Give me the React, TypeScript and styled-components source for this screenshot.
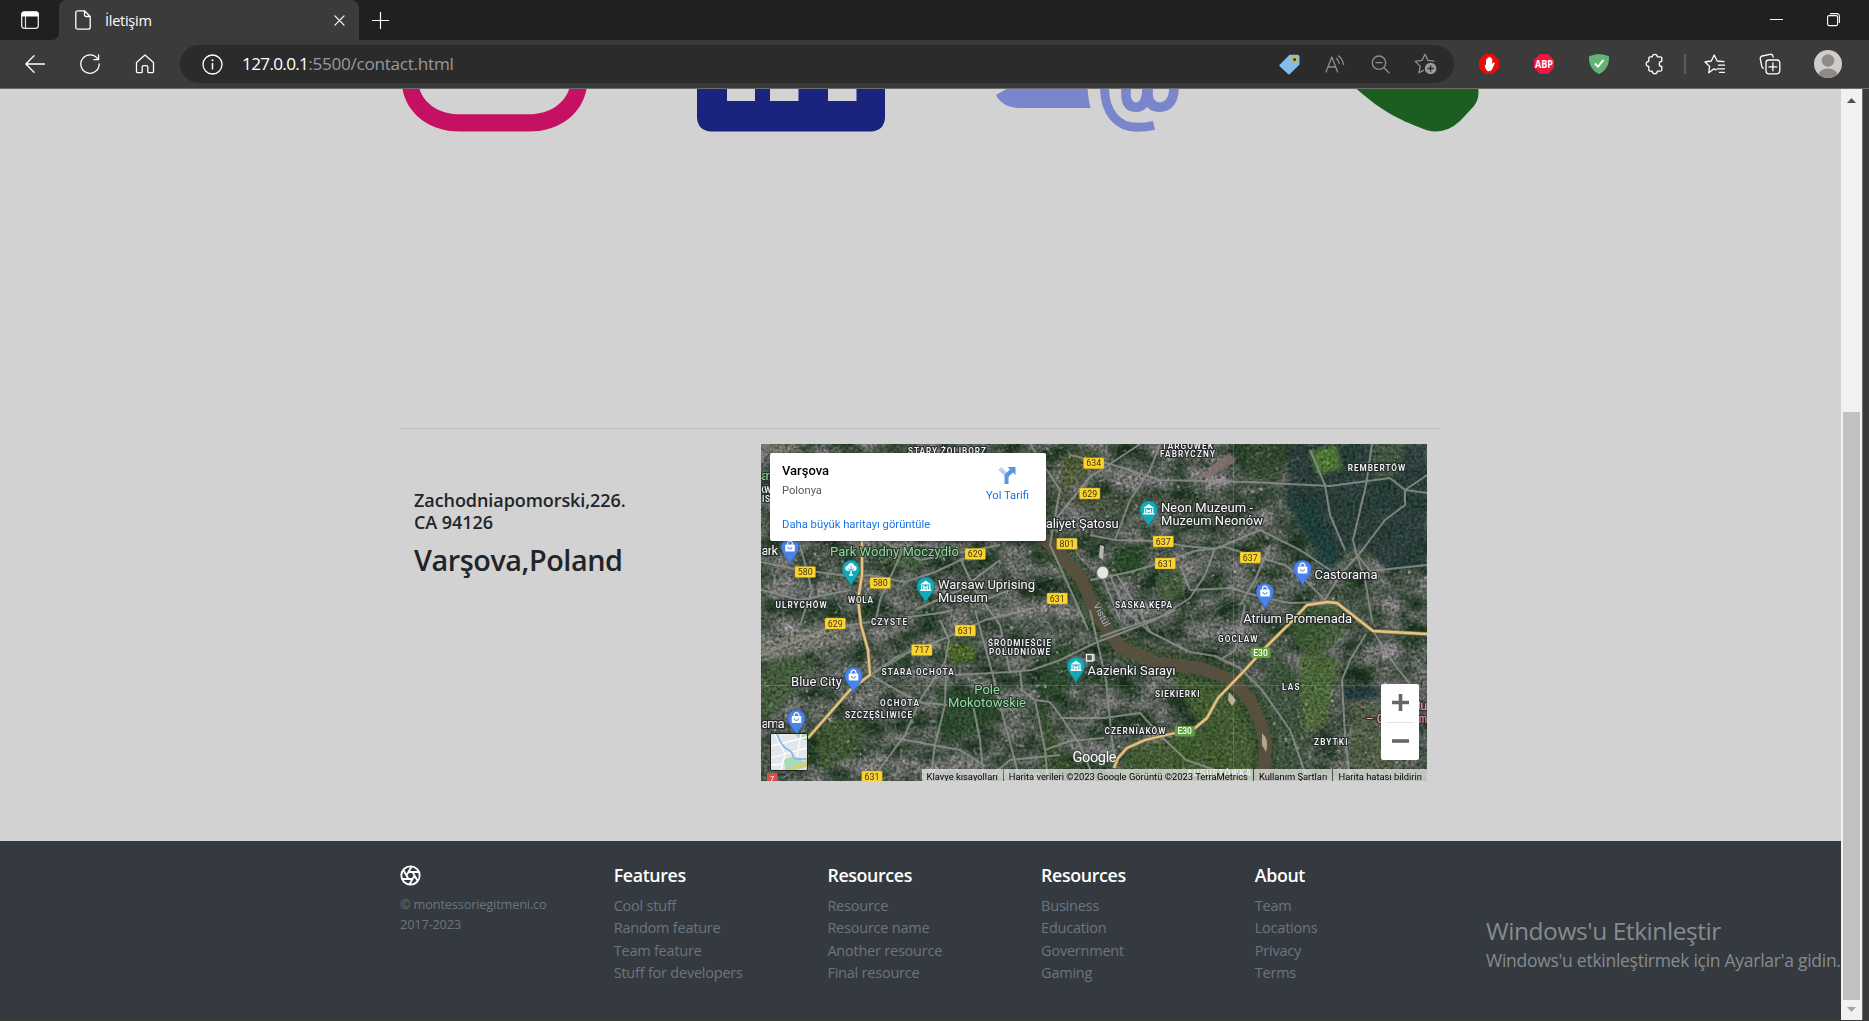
import React from "react";
import styled, { createGlobalStyle } from "styled-components";

const ui = `"Open Sans", "Noto Sans", sans-serif`;
const maps = `Roboto, "Noto Sans", sans-serif`;

const GlobalStyle = createGlobalStyle`
  *, *::before, *::after { box-sizing: border-box; }
  body { margin: 0; background: #d2d2d2; font-family: ${ui}; overflow: hidden; }
  h2, h5, p, ul { margin: 0; padding: 0; font-weight: inherit; }
`;

/* ---------- browser frame ---------- */

const Window = styled.div`
  display: flex;
  flex-direction: column;
  width: 1869px;
  height: 1021px;
  background: #3b3b3b;
`;

const TabStrip = styled.header`
  display: flex;
  align-items: stretch;
  height: 40px;
  background: #202020;
`;

const TabActions = styled.div`
  display: flex;
  align-items: center;
  justify-content: center;
  width: 59px;
  padding-left: 1px;
  border-bottom-right-radius: 7px;
  box-shadow: 0 7px 0 #3b3b3b;
`;

const Tab = styled.div`
  display: flex;
  align-items: center;
  width: 300px;
  padding: 0 14px 0 16px;
  border-radius: 8px 8px 0 0;
  background: #3b3b3b;
`;

const TabTitle = styled.span`
  flex: 1;
  padding-left: 14px;
  color: #fff;
  font-size: 14.6px;
  line-height: 20px;
  letter-spacing: -0.3px;
`;

const NewTab = styled.div`
  display: flex;
  flex: 1;
  align-items: center;
  padding-left: 13px;
  border-bottom-left-radius: 7px;
`;

const WindowButtons = styled.div`
  display: flex;
  align-items: center;
  gap: 44px;
  padding-right: 29px;
`;

const Toolbar = styled.nav`
  display: flex;
  align-items: center;
  height: 49px;
  padding-left: 7px;
  border-bottom: 1px solid #6c6c6c;
`;

const ToolSlot = styled.div<{ $w?: number }>`
  display: flex;
  align-items: center;
  justify-content: center;
  width: ${(p) => p.$w ?? 55}px;
  height: 38px;
`;

const AddressBar = styled.div`
  display: flex;
  align-items: center;
  width: 1274px;
  height: 38px;
  margin: 0 7px 0 8px;
  padding: 0 6px 0 22px;
  border-radius: 19px;
  background: #2b2b2b;
`;

const Url = styled.span`
  flex: 1;
  padding-left: 19px;
  color: #9a9a9a;
  font-size: 17.2px;
  line-height: 24px;
  letter-spacing: -0.3px;
`;

const Host = styled.span`
  color: #fff;
  letter-spacing: -0.7px;
`;

const Separator = styled.div`
  width: 2px;
  height: 20px;
  margin: 0 1px 0 3px;
  background: #5c5c5c;
`;

const Viewport = styled.div`
  display: flex;
  height: 931px;
  margin-right: 6px;
  border-right: 1px solid #6c6c6c;
`;

const Page = styled.main`
  position: relative;
  display: flex;
  flex: 1;
  flex-direction: column;
  background: #d2d2d2;
`;

const Scrollbar = styled.aside`
  display: flex;
  flex-direction: column;
  width: 21px;
  background: #f1f1f1;
`;

const ScrollArrow = styled.div<{ $down?: boolean }>`
  display: flex;
  align-items: center;
  justify-content: center;
  height: ${(p) => (p.$down ? 20 : 23)}px;
  padding-right: 1px;
  transform: ${(p) => (p.$down ? "rotate(180deg)" : "none")};
  color: ${(p) => (p.$down ? "#a3a3a3" : "#505050")};
`;

const ScrollTrack = styled.div`
  flex: 1;
  padding: 300px 2px 0;
`;

const ScrollThumb = styled.div`
  height: 588px;
  background: #c1c1c1;
`;

/* ---------- page content ---------- */

const IconRow = styled.section`
  display: grid;
  grid-template-columns: 295px 299px 359.5px 1fr;
  height: 339px;
  padding-left: 402px;
`;

const Contact = styled.section`
  display: flex;
  justify-content: space-between;
  width: 1040px;
  height: 413px;
  margin-left: 400px;
  padding: 15px 13px 0 14px;
  border-top: 1px solid #bcbcbc;
`;

const Address = styled.div`
  padding-top: 45px;
  color: #212529;
`;

const Street = styled.h5`
  font-size: 18px;
  font-weight: 560;
  line-height: 22px;
  letter-spacing: -0.07px;
`;

const City = styled.h2`
  margin-top: 9px;
  font-size: 28.8px;
  font-weight: 560;
  line-height: 36px;
  letter-spacing: -0.45px;
`;

const MapFrame = styled.div`
  position: relative;
  width: 666px;
  height: 337px;
  overflow: hidden;
  background: #4a5546;
  font-family: ${maps};
`;

const InfoCard = styled.div`
  position: absolute;
  left: 9px;
  top: 9px;
  display: flex;
  justify-content: space-between;
  width: 276px;
  height: 88px;
  padding: 9px 17px 0 12px;
  border-radius: 2px;
  background: #fff;
  box-shadow: 0 1px 3px rgba(0, 0, 0, 0.35);
`;

const CardText = styled.div`
  display: flex;
  flex-direction: column;
`;

const PlaceName = styled.strong`
  color: #000;
  font-size: 13px;
  font-weight: 500;
  line-height: 18px;
`;

const PlaceRegion = styled.span`
  margin-top: 3px;
  color: #5b5b5b;
  font-size: 11.2px;
  line-height: 16px;
`;

const MapLink = styled.a`
  color: #1a73e8;
  font-size: 11.25px;
  line-height: 16px;
`;

const BiggerMap = styled(MapLink)`
  margin-top: 18px;
`;

const Directions = styled.div`
  display: flex;
  flex-direction: column;
  align-items: center;
  gap: 4px;
  padding-top: 4px;
`;

const ZoomControl = styled.div`
  position: absolute;
  right: 8px;
  top: 240px;
  display: flex;
  flex-direction: column;
  align-items: center;
  width: 38px;
  height: 76px;
  border-radius: 2px;
  background: #fff;
`;

const ZoomButton = styled.div`
  display: flex;
  flex: 1;
  align-items: center;
  justify-content: center;
  width: 28px;
  & + & { border-top: 1px solid #e2e2e2; }
`;

const LayerThumb = styled.div`
  position: absolute;
  left: 9px;
  top: 289px;
  width: 38px;
  height: 38px;
  border: 1px solid #222;
  border-radius: 2px;
  overflow: hidden;
`;

const Attribution = styled.div`
  position: absolute;
  right: 0;
  bottom: 0;
  display: flex;
  height: 12px;
`;

const AttributionItem = styled.span`
  padding: 0 5px;
  background: rgba(240, 240, 240, 0.72);
  color: #000;
  font-size: 9.37px;
  line-height: 15px;
  white-space: nowrap;
  & + & { margin-left: 1px; }
`;

const MapArt = styled.svg`
  display: block;
  text { font-family: ${maps}; paint-order: stroke; stroke-linejoin: round; }
`;

const Grain = styled.rect`
  mix-blend-mode: overlay;
`;

/* ---------- footer ---------- */

const Footer = styled.footer`
  display: grid;
  grid-template-columns: repeat(5, 213.7px);
  flex: 1;
  padding: 22px 0 0 400px;
  background: #343a40;
`;

const FooterColumn = styled.div`
  color: #6c757d;
`;

const FooterHeading = styled.h5`
  color: #fff;
  font-size: 17.8px;
  font-weight: 600;
  line-height: 25px;
  letter-spacing: -0.35px;
`;

const LinkList = styled.ul`
  padding-top: 7px;
  list-style: none;
`;

const LinkItem = styled.li`
  font-size: 14.5px;
  line-height: 22.35px;
  letter-spacing: -0.22px;
`;

const Copyright = styled.p`
  margin-top: 7px;
  font-size: 12.8px;
  line-height: 20px;
  letter-spacing: -0.18px;
`;

const Brand = styled.div`
  display: flex;
  height: 24px;
  padding-top: 2px;
`;

const Watermark = styled.div`
  position: absolute;
  left: 1486px;
  bottom: 48px;
  color: #878b8e;
  white-space: nowrap;
`;

const WatermarkTitle = styled.p`
  font-size: 24.5px;
  line-height: 34px;
  letter-spacing: -0.43px;
`;

const WatermarkText = styled.p`
  font-size: 17.5px;
  line-height: 24px;
  letter-spacing: -0.27px;
`;

/* ---------- map data ---------- */

let seed = 17;
const rnd = () => {
  seed = (seed * 16807) % 2147483647;
  return seed / 2147483647;
};

const roofColors = ["#858a8b", "#6c7476", "#999a96", "#5a6468", "#3a4645", "#2e3a35", "#7c6d65", "#5c6757"];

const isBuiltUp = (x: number, y: number) =>
  !(x > 1280 && y < 565) && !(x > 1170 && x < 1270 && y > 660) && !(x > 1290 && x < 1350 && y > 620 && y < 680) &&
  !(x > 935 && x < 1000 && y > 690 && y < 740);

const blocks = Array.from({ length: 3000 }, () => {
  const x = 761 + rnd() * 666;
  const y = 444 + rnd() * 337;
  return { x, y, w: 1 + rnd() * 3.2, h: 0.8 + rnd() * 2.2, a: rnd() > 0.5 ? -22 : 68, c: roofColors[Math.floor(rnd() * 8)], o: 0.3 + rnd() * 0.5 };
}).filter((b) => isBuiltUp(b.x, b.y));

const lanes = Array.from({ length: 380 }, () => {
  const x = 761 + rnd() * 666;
  const y = 444 + rnd() * 337;
  const l = 12 + rnd() * 34;
  const a = ((rnd() > 0.5 ? -22 : 68) + rnd() * 16 - 8) * (Math.PI / 180);
  return { x, y, x2: x + Math.cos(a) * l, y2: y + Math.sin(a) * l };
}).filter((b) => isBuiltUp(b.x, b.y));

const fields: [string, string][] = [
  ["M1290 444H1427V565L1390 572 1360 545 1330 560 1285 505Z", "#223a34"],
  ["M1372 444H1405L1400 475 1375 480Z", "#46543f"],
  ["M1235 444H1290L1282 482 1250 478Z", "#2e4529"],
  ["M1310 452L1335 445 1342 468 1318 474Z", "#547a35"],
  ["M1290 508L1312 500 1340 560 1325 575Z", "#1f3b38"],
  ["M1297 608L1340 604 1352 622 1330 650 1310 660 1292 640Z", "#3c5631"],
  ["M1300 655L1340 660 1325 725 1300 735Z", "#4a6436"],
  ["M1342 686H1380V700H1342Z", "#1f3638"],
  ["M1165 667L1235 680 1262 730 1258 781 1120 781 1130 745 1205 730Z", "#40592e"],
  ["M1275 640L1300 690 1310 781 1275 781 1262 700Z", "#3a5138"],
  ["M940 690L995 690 1000 720 940 745Z", "#294429"],
  ["M944 642L975 646 975 662 950 662Z", "#4d6a2a"],
  ["M1042 650L1070 645 1072 690 1040 700Z", "#2a4529"],
  ["M1115 545L1150 548 1140 575 1112 578Z", "#274627"],
  ["M1155 575L1180 570 1185 595 1160 600Z", "#3b5534"],
  ["M880 545L925 550 920 570 880 560Z", "#3b5534"],
  ["M815 725L862 715 860 755 820 770Z", "#38522c"],
  ["M761 444H800V452L770 455Z", "#77746a"],
  ["M761 670L800 650 815 665 790 700 761 720Z", "#42593a"],
  ["M761 640L830 625 850 640 800 655 761 662Z", "#7a7a6f"],
  ["M930 475L1110 495 1230 500 1225 515 1100 510Z", "#434f3c"],
  ["M1060 455L1095 450 1085 480 1060 490Z", "#4f5837"],
  ["M1040 690L1060 750 1090 781 1040 781Z", "#314b2b"],
  ["M1350 700L1380 705 1400 781 1352 781Z", "#4d5a41"],
];

const roads: string[] = [
  "M761 655L800 640 825 629 870 622 940 613 953 610",
  "M761 562L795 569 855 577 870 575 905 582 935 572 965 558",
  "M870 675L895 658 920 648 948 637 985 620 1035 608",
  "M870 675L915 700 930 705M870 675L905 655",
  "M955 675L1010 672 1032 670 1060 660 1095 643 1150 622 1175 610",
  "M975 610L992 672 1000 705 1012 750 1020 781",
  "M940 620L949 640 945 662 920 700 905 735 878 771",
  "M946 672L945 705 935 745 930 781",
  "M973 705L980 740 984 781M915 702L947 705M895 738L960 750 985 766",
  "M1020 672L1022 690 1035 700 1045 750 1048 781",
  "M1035 700L1050 702 1062 718 1080 745 1095 781",
  "M1045 750L1070 741 1104 738",
  "M1060 718L1104 718 1140 713 1160 735 1186 760 1215 770",
  "M1090 610L1106 680 1112 740 1116 768",
  "M1090 580L1130 572 1160 563 1195 551 1225 547 1250 555 1285 565 1305 580 1325 600",
  "M1090 535L1115 540 1155 541 1185 546 1215 549",
  "M1215 549L1205 575 1190 598 1160 617 1125 628 1100 637",
  "M1110 575L1125 610 1150 632 1190 652 1215 656 1240 668 1262 690 1290 730 1308 781",
  "M1190 590L1230 588 1265 598 1290 603 1325 602",
  "M1325 600L1340 575 1360 553 1385 520 1405 505 1405 490 1427 475",
  "M1372 444L1366 485 1353 540 1356 553 1365 580 1372 620",
  "M1373 631L1395 665 1410 684M1366 634L1350 660 1342 680 1345 735 1350 781",
  "M1405 490L1427 493M1405 490L1390 478 1330 486 1250 482 1160 480 1110 464",
  "M1110 464L1090 477 1055 520M1110 464L1140 444M1110 464L1070 455",
  "M1310 450L1325 485 1330 515 1345 550M1356 553L1370 571 1427 565",
  "M1245 605L1235 650 1220 660M1270 545L1255 580 1240 605",
  "M1215 549L1260 530 1300 550 1330 570M1180 565L1190 590",
  "M1030 444L1060 490 1050 545 1075 600 1088 630",
  "M960 558L975 590 1000 625 1010 672M905 545L880 600 875 625",
  "M1000 560L960 590 915 610M1035 580L985 600",
  "M1104 580L1120 620M1117 575L1140 612 1150 632",
  "M761 590L800 600 850 590M800 545L812 590 800 625",
  "M1160 444L1150 470 1130 500 1115 540",
  "M985 781L1010 760 1060 755M880 540L920 560 1000 545",
];

const highways: string[] = [
  "M862 541L862 575 858 600 861 625 868 650 870 675 850 690 808 738",
  "M1114 768L1118 758 1127 748 1145 740 1175 733 1195 728 1207 718 1218 698 1245 670 1263 650 1290 623 1307 605 1327 602 1337 603 1373 631 1427 634",
];

const river = "M1000 470L1035 530 1062 556 1082 580 1095 612 1120 647 1157 663 1200 668 1230 679 1250 700 1260 722 1266 743 1263 781";

type Label = [string, number, number, number];

const districts: Label[] = [
  ["STARY ŻOLIBORZ", 908, 454, 78], ["WOLA", 848, 602.6, 25], ["ULRYCHÓW", 775.6, 608, 51],
  ["TARGÓWEK", 1162, 449, 51], ["FABRYCZNY", 1160, 457, 55], ["REMBERTÓW", 1347.7, 471, 57.5],
  ["SASKA KĘPA", 1115, 607.5, 57], ["CZYSTE", 871, 624.5, 36], ["ŚRÓDMIEŚCIE", 988, 646, 63],
  ["POŁUDNIOWE", 989, 654.6, 61], ["STARA OCHOTA", 881.6, 675, 72], ["OCHOTA", 880, 706, 39],
  ["SZCZĘŚLIWICE", 845, 718, 67], ["GOCLAW", 1218, 642, 39.5], ["LAS", 1282, 690, 17.5],
  ["SIEKIERKI", 1155, 697, 44.5], ["CZERNIAKÓW", 1104.5, 733.5, 61], ["ZBYTKI", 1314, 744.6, 33.5],
  ["OW", 761.5, 493, 10], ["IS", 762, 502, 8],
];

const places: Label[] = [
  ["aliyet Şatosu", 1045.7, 527.7, 73], ["ark", 761.5, 555, 16.5], ["Warsaw Uprising", 938, 588.5, 97],
  ["Museum", 938, 601.5, 50], ["Neon Muzeum -", 1161, 512, 92], ["Muzeum Neonów", 1161, 524.7, 102],
  ["Castorama", 1314.5, 578.5, 63], ["Atrium Promenada", 1243.2, 623, 109], ["Blue City", 791, 685.5, 51],
  ["ama", 761.5, 727.6, 23], ["Aazienki Sarayı", 1087.5, 675, 88],
];

const parks: Label[] = [
  ["Park Wodny Moczydło", 830, 556, 129], ["Pole", 974.3, 694, 25.5], ["Mokotowskie", 948, 706.8, 78], ["ar", 761, 480, 9],
];

const badges: [string, number, number][] = [
  ["629", 965, 548.5], ["580", 795, 566.5], ["580", 870, 577.5], ["631", 1047, 593], ["801", 1056.7, 538.2],
  ["634", 1083.5, 457.8], ["629", 1079.5, 488], ["637", 1153, 536], ["631", 1155, 558], ["637", 1240, 552],
  ["629", 825, 618], ["631", 955, 625], ["717", 911.5, 644.5], ["631", 861.7, 771],
];

const pins: [number, number, "museum" | "shop" | "tree"][] = [
  [790, 547, "shop"], [851, 569, "tree"], [925.7, 586, "museum"], [1148.7, 509.5, "museum"], [1302.5, 569, "shop"],
  [1265, 592, "shop"], [853.5, 676, "shop"], [796.5, 718.5, "shop"], [1076, 666, "museum"],
];

const Pin = ({ x, y, kind }: { x: number; y: number; kind: string }) => (
  <g transform={`translate(${x} ${y})`}>
    <path d="M0 17.5C-.8 12-8.8 6.500-8.800 0A8.800 8.800 0 0 1 8.800 0C8.800 6.500.8 12 0 17.500Z" fill={kind === "shop" ? "#4a84ea" : "#12a9b9"} stroke={kind === "shop" ? "#2c5cc0" : "#0a7f8c"} strokeWidth=".6" />
    {kind === "shop" && (
      <>
        <rect x="-4.800" y="-2.500" width="9.600" height="7" rx="1" fill="#fff" />
        <path d="M-2.500-2.500V-3.300A2.500 2.500 0 0 1 2.500-3.300V-2.500" fill="none" stroke="#fff" strokeWidth="1.200" />
        <path d="M-2 0A2 2 0 0 0 2 0" fill="none" stroke="#4a84ea" strokeWidth="1" />
      </>
    )}
    {kind === "museum" && (
      <>
        <path d="M-5.500-1.500L0-5.500 5.500-1.500ZM-5.500 3.500H5.500V5H-5.500Z" fill="#fff" />
        <path d="M-4 4V-1M4 4V-1M-1.800 4V.3L0 2 1.800.3V4" fill="none" stroke="#fff" strokeWidth="1.300" />
      </>
    )}
    {kind === "tree" && (
      <>
        <circle cx="0" cy="-3" r="3" fill="#fff" />
        <circle cx="-3" cy="-.8" r="2.600" fill="#fff" />
        <circle cx="3" cy="-.8" r="2.600" fill="#fff" />
        <path d="M0 5.500V-3M0 2L-3-.5M0 2L3-.5" fill="none" stroke="#12a9b9" strokeWidth=".8" />
        <path d="M0 6V1.500M-2 6H2" stroke="#fff" strokeWidth="1.500" />
      </>
    )}
  </g>
);

const SatelliteMap = () => (
  <MapArt width="666" height="337" viewBox="761 444 666 337">
    <defs>
      <filter id="grain" x="0" y="0" width="100%" height="100%" colorInterpolationFilters="sRGB">
        <feTurbulence type="fractalNoise" baseFrequency=".34" numOctaves="3" seed="5" />
        <feColorMatrix values="1.100 .9 0 0 -.48  1.100 .9 0 0 -.48  1.100 .9 0 0 -.48  0 0 0 0 1" />
      </filter>
      <filter id="patches" x="0" y="0" width="100%" height="100%" colorInterpolationFilters="sRGB">
        <feTurbulence type="fractalNoise" baseFrequency=".035 .045" numOctaves="4" seed="11" />
        <feColorMatrix values="1.100 0 0 0 -.25  .8 0 0 0 -.05  1.050 0 0 0 -.24  0 0 0 0 1" />
      </filter>
      <filter id="soft"><feGaussianBlur stdDeviation="2" /></filter>
    </defs>
    <rect x="761" y="444" width="666" height="337" fill="#454e4b" />
    <rect x="761" y="444" width="666" height="337" filter="url(#patches)" opacity=".6" />
    <g filter="url(#soft)">
      {fields.map(([d, c]) => <path key={d} d={d} fill={c} opacity=".88" />)}
    </g>
    <g stroke="#8d9290" strokeWidth=".6" opacity=".5">
      {lanes.map((l, i) => <line key={i} x1={l.x} y1={l.y} x2={l.x2} y2={l.y2} />)}
    </g>
    {blocks.map((b, i) => (
      <rect key={i} x={b.x} y={b.y} width={b.w} height={b.h} fill={b.c} opacity={b.o} transform={`rotate(${b.a} ${b.x} ${b.y})`} />
    ))}
    <path d={river} fill="none" stroke="#344a30" strokeWidth="25" strokeLinejoin="round" opacity=".8" />
    <Grain x="761" y="444" width="666" height="337" filter="url(#grain)" opacity=".42" />
    <path d={river} fill="none" stroke="#5a5040" strokeWidth="12.500" strokeLinejoin="round" opacity=".92" />
    <path d="M1262 733Q1270 740 1266 752L1262 745Z" fill="#b3a487" />
    <path d="M1229 692L1236 700 1232 706 1228 700Z" fill="#bfae9c" />
    <path d="M1215 463L1230 453 1235 462 1208 478 1200 476Z" fill="#8f7472" opacity=".7" />
    <g fill="none" stroke="#8e908e" strokeWidth="2" strokeLinejoin="round" opacity=".85">
      {roads.map((d) => <path key={d} d={d} />)}
    </g>
    <path d="M1233.500 444V781M761 685.500H1427" stroke="#c5cec8" strokeWidth=".5" opacity=".4" />
    <g fill="none" strokeLinejoin="round">
      {highways.map((d) => <path key={d} d={d} stroke="#8a7440" strokeWidth="3.800" />)}
      {highways.map((d) => <path key={d} d={d} stroke="#e2c488" strokeWidth="2.300" />)}
    </g>
    <ellipse cx="1102.700" cy="572.700" rx="6" ry="6.500" fill="#e6e6e2" stroke="#6d6f6c" />
    <path d="M1100 545L1104 546 1103 560 1099 557Z" fill="#b9b8b0" />
    {badges.map(([t, x, y], i) => (
      <g key={i}>
        <rect x={x} y={y} width="20.500" height="11" rx="1" fill="#fbd42f" stroke="#b99a1d" strokeWidth=".4" />
        <text x={x + 10.25} y={y + 8.6} fontSize="8.800" textAnchor="middle" fill="#3c3516">{t}</text>
      </g>
    ))}
    {([[1250.5, 647.5], [1174.7, 726]] as const).map(([x, y]) => (
      <g key={x}>
        <rect x={x} y={y} width="20" height="10.500" rx="1.500" fill="#5f9f3e" />
        <text x={x + 10} y={y + 8.3} fontSize="8.500" fontWeight="500" textAnchor="middle" fill="#fff">E30</text>
      </g>
    ))}
    <rect x="767" y="773" width="10.500" height="9" rx="1" fill="#d6504f" />
    <text x="772.200" y="780.500" fontSize="7.500" textAnchor="middle" fill="#fff">7</text>
    <g fontSize="8.200" fontWeight="600" fill="#f3f3f3" stroke="#262c2d" strokeWidth="2.200">
      {districts.map(([t, x, y, w]) => <text key={t} x={x} y={y} textLength={w}>{t}</text>)}
    </g>
    <text x="1187" y="776" fontSize="8.200" fontWeight="600" fill="#e4e4e4" textLength="64">AUGUSTÓWKA</text>
    <g fontSize="13" fill="#f8f8f8" stroke="#2a2d2e" strokeWidth="2.600">
      {places.map(([t, x, y, w]) => <text key={t} x={x} y={y} textLength={w}>{t}</text>)}
    </g>
    <g fontSize="13" fill="#8fdc9c" stroke="#26332a" strokeWidth="2.200">
      {parks.map(([t, x, y, w]) => <text key={t} x={x} y={y} textLength={w}>{t}</text>)}
    </g>
    <g fontSize="12" fill="#f3a6cc" stroke="#3a2832" strokeWidth="2.200">
      <text x="1366" y="722.500">– C</text>
      <text x="1418" y="710" textLength="9">tu</text>
      <text x="1419" y="722.500" textLength="8" lengthAdjust="spacingAndGlyphs">m</text>
    </g>
    <text transform="translate(1093 605) rotate(63)" fontSize="10" fill="#a9b5c0">Vistül</text>
    <path d="M1086.500 654.500H1092.500V661H1086.500ZM1094 654V661" fill="none" stroke="#e9e9e9" strokeWidth="1.300" />
    {pins.map(([x, y, k]) => <Pin key={`${x}-${y}`} x={x} y={y} kind={k} />)}
    <text x="1072.500" y="761.500" fontSize="14.500" fill="#fff" stroke="#3d443e" strokeWidth="1.200" textLength="44">Google</text>
  </MapArt>
);

/* ---------- icons ---------- */

const line = { fill: "none", stroke: "#fff", strokeWidth: 1.3, strokeLinecap: "round", strokeLinejoin: "round" } as const;
const dim = { ...line, stroke: "#8f8f8f" } as const;

const TabActionsIcon = () => (
  <svg width="18" height="18" viewBox="0 0 18 18">
    <rect x=".7" y=".9" width="16.600" height="16.400" rx="2.500" fill="none" stroke="#e8e8e8" strokeWidth="1.300" />
    <path d="M.5 5.500V3A2.500 2.500 0 0 1 3 .5H15A2.500 2.500 0 0 1 17.500 3V5.500Z" fill="#fff" />
    <path d="M4.500 5V17" stroke="#ddd" strokeWidth="1.200" />
  </svg>
);

const DocumentIcon = () => (
  <svg width="16" height="20" viewBox="0 0 16 20">
    <path {...line} d="M9.500.8H2.800A2 2 0 0 0 .8 2.800V17.200A2 2 0 0 0 2.800 19.200H13.200A2 2 0 0 0 15.200 17.200V6.500ZM9.500.8V5A1.500 1.500 0 0 0 11 6.500H15.200" />
  </svg>
);

const BackIcon = () => (
  <svg width="20" height="18" viewBox="0 0 20 18"><path {...line} d="M9 .8L.9 9 9 17.200M.9 9H19.500" /></svg>
);

const ReloadIcon = () => (
  <svg width="20" height="20" viewBox="0 0 20 20"><path {...line} d="M18 5.500A9.200 9.200 0 1 0 19.200 10M18.600 1V5.700H13.900" /></svg>
);

const HomeIcon = () => (
  <svg width="20" height="20" viewBox="0 0 20 20">
    <path {...line} d="M10 1L1.800 8.300A1 1 0 0 0 1.500 9V17.500A1.200 1.200 0 0 0 2.700 18.700H6.200A1 1 0 0 0 7.200 17.700V13A1.400 1.400 0 0 1 8.600 11.600H11.400A1.400 1.400 0 0 1 12.800 13V17.700A1 1 0 0 0 13.800 18.700H17.300A1.200 1.200 0 0 0 18.500 17.500V9A1 1 0 0 0 18.200 8.300Z" />
  </svg>
);

const SiteInfoIcon = () => (
  <svg width="21" height="21" viewBox="0 0 21 21">
    <circle {...line} cx="10.500" cy="10.500" r="9.500" />
    <path d="M10.500 9V15.500" stroke="#fff" strokeWidth="1.500" /><circle cx="10.500" cy="6.200" r="1.050" fill="#fff" />
  </svg>
);

const TagIcon = () => (
  <svg width="21" height="21" viewBox="0 0 21 21">
    <path d="M10.500.7H18.500A2 2 0 0 1 20.500 2.700V10.500L11 20A1.500 1.500 0 0 1 9 20L.9 12.500A1.500 1.500 0 0 1 .9 10.400Z" fill="#83bdec" />
    <circle cx="15.600" cy="5.400" r="2.200" fill="#3d3a22" stroke="#f0b400" strokeWidth="1.400" />
  </svg>
);

const ReadAloudIcon = () => (
  <svg width="20" height="18" viewBox="0 0 20 18">
    <path {...dim} d="M1 17L6.800 2 12.600 17M3 12H10.600M11.500 3.500A9 9 0 0 1 14.200 8.500M13.500 .9A13 13 0 0 1 18.500 9.500" />
  </svg>
);

const ZoomOutIcon = () => (
  <svg width="19" height="19" viewBox="0 0 19 19"><circle {...dim} cx="8" cy="7.700" r="6.700" /><path {...dim} d="M5 7.700H11M12.800 12.500L18 17.700" /></svg>
);

const StarAddIcon = () => (
  <svg width="23" height="22" viewBox="0 0 23 22">
    <path {...dim} d="M20 8.200L14 7.400 11 1.300 8 7.400 1.300 8.400 6.200 13.100 5 19.800 9.500 17.400" />
    <circle cx="16.600" cy="15.500" r="5.800" fill="#9a9a9a" /><path d="M16.600 12.300V18.700M13.400 15.500H19.800" stroke="#2b2b2b" strokeWidth="1.300" />
  </svg>
);

const octagon = "M6 0H14L20 6V14L14 20H6L0 14V6Z";

const AdblockIcon = () => (
  <svg width="20" height="20" viewBox="0 0 20 20">
    <path d={octagon} fill="#ea0b0b" />
    <path d="M5.600 10.500L7 10.900V5.200A.8.8 0 0 1 8.500 5.200V4A.8.8 0 0 1 10.100 4V3.500A.8.8 0 0 1 11.700 3.500V4.500A.8.8 0 0 1 13.200 4.500V10L14.500 8.600A.9.9 0 0 1 15.700 9.500L13 15.500Q12 17.200 10 17.200 7.500 17.200 6.500 14.500Z" fill="#fff" />
  </svg>
);

const AbpText = styled.text`
  font-family: ${ui};
  font-size: 11px;
  font-weight: 700;
  fill: #fff;
`;

const AbpIcon = () => (
  <svg width="20" height="20" viewBox="0 0 20 20"><path d={octagon} fill="#f0163f" /><AbpText x="1" y="14" textLength="18" lengthAdjust="spacingAndGlyphs">ABP</AbpText></svg>
);

const ShieldIcon = () => (
  <svg width="20" height="20" viewBox="0 0 20 20">
    <path d="M10 0Q15 .3 20 2.200C20.300 10.500 17.500 16.500 10 20 2.500 16.500-.3 10.500 0 2.200Q5 .3 10 0Z" fill="#63b375" />
    <path d="M5.800 9.500L9 12.700 14.500 5.800" fill="none" stroke="#fff" strokeWidth="1.900" />
  </svg>
);

const PuzzleIcon = () => (
  <svg width="20" height="22" viewBox="0 0 20 22">
    <path {...line} d="M8.300 3.800A2.500 2.500 0 0 1 13.300 3.800H16.300A1.500 1.500 0 0 1 17.800 5.300V8.300A2.600 2.600 0 0 0 17.800 13.500V16.700A1.500 1.500 0 0 1 16.300 18.200H13.300A2.500 2.500 0 0 1 8.300 18.200H6.300A1.500 1.500 0 0 1 4.800 16.700V13.500A2.600 2.600 0 0 1 4.800 8.300V5.300A1.500 1.500 0 0 1 6.300 3.800Z" />
  </svg>
);

const FavoritesIcon = () => (
  <svg width="22" height="21" viewBox="0 0 22 21">
    <path {...line} d="M12 15.800L10 14.800 4.800 18.800 5.600 12.400 1 8 7.300 7 10.200 1 13.200 7 20 7.600M14.500 11.200H20.500M13 14.800H20.500M15.500 18.300H20.500" />
  </svg>
);

const CollectionsIcon = () => (
  <svg width="22" height="22" viewBox="0 0 22 22">
    <path {...line} d="M4.500 15.300A2.500 2.500 0 0 1 2.800 13.300L1.300 6A2.500 2.500 0 0 1 3.200 3L11 1.300A2.500 2.500 0 0 1 13.900 3.200L14.200 4.200" />
    <rect {...line} x="7" y="7" width="13.800" height="13.800" rx="2.800" /><path {...line} d="M13.900 10V17.800M10 13.900H17.800" />
  </svg>
);

const AvatarIcon = () => (
  <svg width="28" height="28" viewBox="0 0 28 28">
    <clipPath id="face"><circle cx="14" cy="14" r="14" /></clipPath>
    <g clipPath="url(#face)"><rect width="28" height="28" fill="#cfcdcb" /><circle cx="14" cy="10.500" r="6.200" fill="#8f8a87" /><ellipse cx="14" cy="26" rx="10" ry="7.500" fill="#8f8a87" /></g>
  </svg>
);

const ArrowGlyph = () => (
  <svg width="9" height="5" viewBox="0 0 9 5"><path d="M4.500 0L9 5H0Z" fill="currentColor" /></svg>
);

const InstagramArt = () => (
  <svg width="186" height="43" viewBox="0 0 186 43"><path d="M0-4H17C18 10 33 25.300 58 25.300H126C152 25.300 166 10 168-4H185C183 20 162 42.600 127 42.600H58C23 42.600 2 20 0-4Z" fill="#c51162" /></svg>
);

const HospitalArt = () => (
  <svg width="188" height="43" viewBox="0 0 188 43"><path d="M0-1H30V12H58V-1H73V12H101.500V-1H131V12H159.500V-1H188V29Q187 41 175 42.500H13Q1 41 0 29Z" fill="#1a237e" /></svg>
);

const MailArt = () => (
  <svg width="186" height="43" viewBox="0 0 186 43">
    <path d="M0 6L12-1H91.500Q92 9 94.500 19H22Q6 18 0 6Z" fill="#7986cb" />
    <path d="M108.500-2C108.500 24 122 38.300 141 38.300Q150 38.300 158 36.300" fill="none" stroke="#7986cb" strokeWidth="9" />
    <path d="M130 -2V6Q130.500 18.200 140 18.200 151 18.200 151-2M152-2V6Q153 18.200 164 18.200 178 17 178-2" fill="none" stroke="#7986cb" strokeWidth="9.600" />
  </svg>
);

const PhoneArt = () => (
  <svg width="126" height="43" viewBox="0 0 126 43"><path d="M-1-1.500C25 22 45 32 71 41.200Q89 46 104 32L118 17Q124 9 122-1.500Z" fill="#1b5e20" /></svg>
);

const ApertureIcon = () => (
  <svg width="21" height="21" viewBox="0 0 24 24" fill="none" stroke="#fff" strokeWidth="2.100" strokeLinecap="round">
    <circle cx="12" cy="12" r="10.500" />
    <path d="M14.310 8l5.740 9.940M9.690 8h11.480M7.380 12l5.740-9.940M9.690 16L3.950 6.060M14.310 16H2.830M16.620 12l-5.740 9.940" />
  </svg>
);

/* ---------- footer data ---------- */

const columns: { title: string; links: string[] }[] = [
  { title: "Features", links: ["Cool stuff", "Random feature", "Team feature", "Stuff for developers"] },
  { title: "Resources", links: ["Resource", "Resource name", "Another resource", "Final resource"] },
  { title: "Resources", links: ["Business", "Education", "Government", "Gaming"] },
  { title: "About", links: ["Team", "Locations", "Privacy", "Terms"] },
];

export default function App() {
  return (
    <Window>
      <GlobalStyle />
      <TabStrip>
        <TabActions><TabActionsIcon /></TabActions>
        <Tab>
          <DocumentIcon />
          <TabTitle>İletişim</TabTitle>
          <svg width="11" height="11" viewBox="0 0 12 12"><path {...line} d="M1 1L11 11M11 1L1 11" /></svg>
        </Tab>
        <NewTab><svg width="17" height="17" viewBox="0 0 17 17"><path d="M8.500 0V17M0 8.500H17" stroke="#fff" strokeWidth="1.200" /></svg></NewTab>
        <WindowButtons>
          <svg width="13" height="2" viewBox="0 0 13 2"><path d="M0 .5H13" stroke="#fff" /></svg>
          <svg width="13" height="14" viewBox="0 0 13 14">
            <rect x=".6" y="2.600" width="10" height="10" rx="1.500" fill="none" stroke="#fff" strokeWidth="1.100" />
            <path d="M3 .6H10A2.400 2.400 0 0 1 12.400 3V10" fill="none" stroke="#fff" strokeWidth="1.100" />
          </svg>
        </WindowButtons>
      </TabStrip>

      <Toolbar>
        <ToolSlot><BackIcon /></ToolSlot>
        <ToolSlot><ReloadIcon /></ToolSlot>
        <ToolSlot><HomeIcon /></ToolSlot>
        <AddressBar>
          <SiteInfoIcon />
          <Url><Host>127.0.0.1</Host>:5500/contact.html</Url>
          <ToolSlot $w={45.3}><TagIcon /></ToolSlot>
          <ToolSlot $w={45.3}><ReadAloudIcon /></ToolSlot>
          <ToolSlot $w={45.3}><ZoomOutIcon /></ToolSlot>
          <ToolSlot $w={45.3}><StarAddIcon /></ToolSlot>
        </AddressBar>
        <ToolSlot><AdblockIcon /></ToolSlot>
        <ToolSlot><AbpIcon /></ToolSlot>
        <ToolSlot><ShieldIcon /></ToolSlot>
        <ToolSlot><PuzzleIcon /></ToolSlot>
        <Separator />
        <ToolSlot><FavoritesIcon /></ToolSlot>
        <ToolSlot><CollectionsIcon /></ToolSlot>
        <ToolSlot $w={61}><AvatarIcon /></ToolSlot>
      </Toolbar>

      <Viewport>
        <Page>
          <IconRow>
            <InstagramArt />
            <HospitalArt />
            <MailArt />
            <PhoneArt />
          </IconRow>
          <Contact>
            <Address>
              <Street>Zachodniapomorski,226.<br />CA 94126</Street>
              <City>Varşova,Poland</City>
            </Address>
            <MapFrame>
              <SatelliteMap />
              <InfoCard>
                <CardText>
                  <PlaceName>Varşova</PlaceName>
                  <PlaceRegion>Polonya</PlaceRegion>
                  <BiggerMap>Daha büyük haritayı görüntüle</BiggerMap>
                </CardText>
                <Directions>
                  <svg width="18" height="18" viewBox="0 0 18 18">
                    <path d="M.3 4L3.300 1 9.500 7.200 7 10.500Z" fill="#b5d0f5" />
                    <path d="M6.500 18V11Q6.500 8.500 8.200 7L12 3.500 9.500 1H17.500V9L15 6.500 11.200 10Q10.500 10.800 10.500 12V18Z" fill="#5b95e6" />
                  </svg>
                  <MapLink>Yol Tarifi</MapLink>
                </Directions>
              </InfoCard>
              <LayerThumb>
                <svg width="36" height="36" viewBox="0 0 36 36">
                  <rect width="36" height="36" fill="#e3e6ea" />
                  <path d="M24 0H36V6Q28 6 24 0ZM13 26L20 23 36 28V33L24 36H14Z" fill="#a9dcb5" />
                  <path d="M0 12L36 3M0 24L14 20 36 14M10 36L14 20 4 0M26 22L30 0M0 31L12 30" stroke="#fff" strokeWidth="1.300" fill="none" />
                  <path d="M6 0Q10 12 16 15T22 22 36 25" stroke="#8cb8e8" strokeWidth="1.800" fill="none" />
                  <path d="M20 36Q26 31 30 33T36 25" stroke="#f3c45e" strokeWidth="2" fill="none" />
                </svg>
              </LayerThumb>
              <ZoomControl>
                <ZoomButton><svg width="17" height="17" viewBox="0 0 17 17"><path d="M8.500 0V17M0 8.500H17" stroke="#666" strokeWidth="3.600" /></svg></ZoomButton>
                <ZoomButton><svg width="17" height="4" viewBox="0 0 17 4"><path d="M0 2H17" stroke="#666" strokeWidth="3.600" /></svg></ZoomButton>
              </ZoomControl>
              <Attribution>
                <AttributionItem>Klavye kısayolları</AttributionItem>
                <AttributionItem>Harita verileri ©2023 Google Görüntü ©2023 TerraMetrics</AttributionItem>
                <AttributionItem>Kullanım Şartları</AttributionItem>
                <AttributionItem>Harita hatası bildirin</AttributionItem>
              </Attribution>
            </MapFrame>
          </Contact>
          <Footer>
            <FooterColumn>
              <Brand><ApertureIcon /></Brand>
              <Copyright>© montessoriegitmeni.co<br />2017-2023</Copyright>
            </FooterColumn>
            {columns.map((c, i) => (
              <FooterColumn key={i}>
                <FooterHeading>{c.title}</FooterHeading>
                <LinkList>{c.links.map((l) => <LinkItem key={l}>{l}</LinkItem>)}</LinkList>
              </FooterColumn>
            ))}
          </Footer>
          <Watermark>
            <WatermarkTitle>Windows'u Etkinleştir</WatermarkTitle>
            <WatermarkText>Windows'u etkinleştirmek için Ayarlar'a gidin.</WatermarkText>
          </Watermark>
        </Page>
        <Scrollbar>
          <ScrollArrow><ArrowGlyph /></ScrollArrow>
          <ScrollTrack><ScrollThumb /></ScrollTrack>
          <ScrollArrow $down><ArrowGlyph /></ScrollArrow>
        </Scrollbar>
      </Viewport>
    </Window>
  );
}
